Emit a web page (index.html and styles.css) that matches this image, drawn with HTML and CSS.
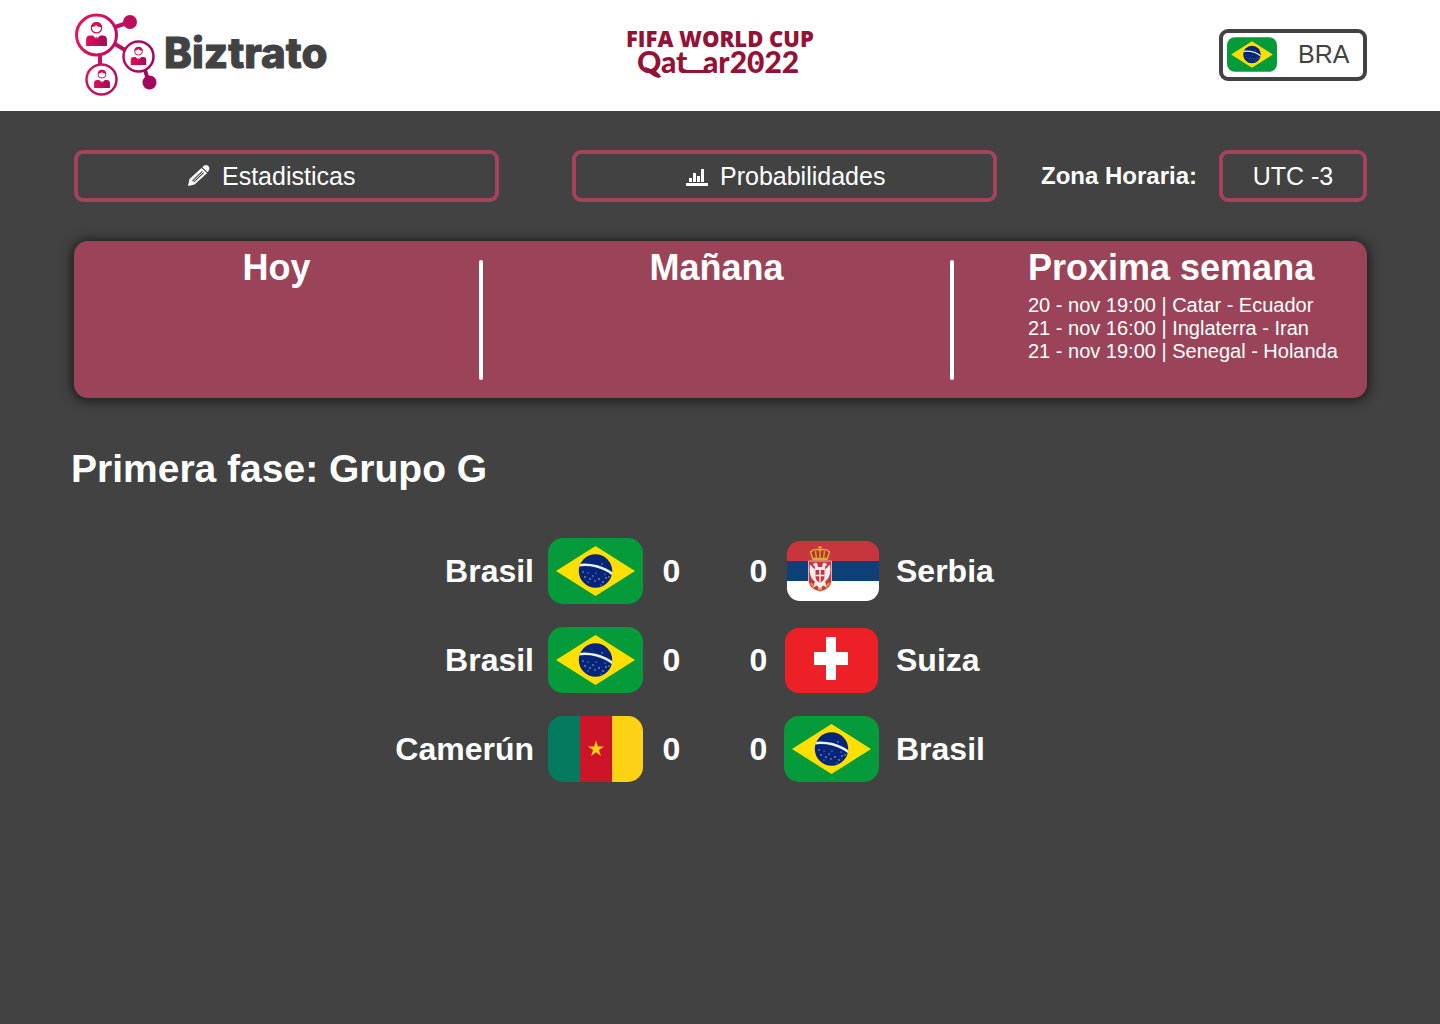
FILE: index.html
```html
<!DOCTYPE html>
<html lang="es">
<head>
<meta charset="utf-8">
<meta name="viewport" content="width=device-width, initial-scale=1">
<title>Biztrato - Qatar 2022</title>
<link rel="stylesheet" href="styles.css">
</head>
<body>
<svg class="sprite" width="0" height="0" aria-hidden="true">
  <defs>
    <linearGradient id="brand" gradientUnits="userSpaceOnUse" x1="0" y1="0" x2="90" y2="20">
      <stop offset="0" stop-color="#ea1560"/>
      <stop offset="1" stop-color="#97065e"/>
    </linearGradient>
    <linearGradient id="suit" x1="0" y1="0" x2="1" y2="0">
      <stop offset="0" stop-color="#e30f55"/>
      <stop offset="1" stop-color="#9d0a5c"/>
    </linearGradient>
    <clipPath id="globe"><circle cx="47.5" cy="33" r="16.7"/></clipPath>
    <clipPath id="serbia-shape"><rect x="3" y="3" width="92" height="60" rx="13"/></clipPath>
    <clipPath id="flag-shape"><rect width="95" height="66" rx="15"/></clipPath>
  </defs>
  <symbol id="person" viewBox="0 0 20 24">
    <circle cx="10" cy="6.5" r="5" fill="none" stroke="#c8105a" stroke-width="1.2"/>
    <path d="M4.8 6C5 2.800 7.500 1 10 1c3 0 5.300 2.200 5.300 5-2.300.3-4.400-.6-5.600-2.100C8.700 5.200 7 6 4.800 6z" fill="#d01058"/>
    <path d="M0 24V17.500C0 15 1.500 13.800 4 13.800h2.500L10 17.500l3.500-3.700H16c2.500 0 4 1.200 4 3.700V24z" fill="url(#suit)"/>
    <path d="M9 15.500h2l-.5 2h-1z" fill="#d01058"/>
  </symbol>
  <symbol id="brazil" viewBox="0 0 95 66">
    <rect width="95" height="66" rx="15" fill="#069b3a"/>
    <path d="M8 33 47.500 8 87 33 47.500 58z" fill="#fedf00"/>
    <circle cx="47.500" cy="33" r="16.700" fill="#05247a"/>
    <g clip-path="url(#globe)">
      <path d="M29 27.500c13-2.300 27 1.500 36 9" fill="none" stroke="#e8f3ee" stroke-width="2.600"/>
      <g fill="#b9c6e2">
        <circle cx="35" cy="34" r=".7"/><circle cx="37" cy="39" r=".8"/><circle cx="40" cy="35" r=".6"/>
        <circle cx="42" cy="41" r=".8"/><circle cx="45" cy="38" r=".7"/><circle cx="48" cy="35" r=".6"/>
        <circle cx="47" cy="43" r=".7"/><circle cx="51" cy="41" r=".8"/><circle cx="55" cy="44" r=".8"/>
        <circle cx="58" cy="40" r=".8"/><circle cx="61" cy="39" r=".7"/><circle cx="53" cy="47" r=".6"/>
        <circle cx="57" cy="36" r=".6"/><circle cx="40" cy="44" r=".6"/><circle cx="54" cy="26" r=".7"/>
      </g>
    </g>
  </symbol>
  <symbol id="serbia" viewBox="0 0 95 66">
    <g clip-path="url(#serbia-shape)">
      <path d="M3 3h92v20H3z" fill="#c7363d"/>
      <path d="M3 23h92v20H3z" fill="#0c4077"/>
      <path d="M3 43h92v20H3z" fill="#fff"/>
    </g>
    <path d="M24.500 23h23v19c0 6-4 10-11.500 11.500C28.500 52 24.500 48 24.500 42z" fill="#c7363d" stroke="#e8d6d8" stroke-width=".8"/>
    <path d="M33 25c-2-1-4 .5-4 2l2 1.500v3l-5-5c-1 7 0 14 5 17l-2 6 4-2 3 4 3-4 4 2-2-6c5-3 6-10 5-17l-5 5v-3l2-1.500c0-1.500-2-3-4-2l-1 4h-4z" fill="#f4eeee"/>
    <path d="M31.500 32h9v7c0 3-2 4.500-4.500 5.500-2.500-1-4.500-2.500-4.500-5.500z" fill="#c7363d"/>
    <path d="M36 32v12M31.500 37.500h9" stroke="#fff" stroke-width="1.300"/>
    <path d="M27 45l3 5M45 45l-3 5M34 51h4" stroke="#dfa02d" stroke-width="1.800"/>
    <path d="M29 21.500 26.500 14c2-2.500 6-3 9.500-2 3.500-1 7.500-.5 9.500 2L43 21.500z" fill="#b2342f" stroke="#dfaa32" stroke-width="1.500"/>
    <path d="M36 8v13M34 9.500h4M31.500 13l1 8M40.500 13l-1 8M29 20.500h14" stroke="#dfaa32" stroke-width="1.400"/>
  </symbol>
  <symbol id="switzerland" viewBox="0 0 95 66">
    <rect x="1" y="1" width="93" height="65" rx="14" fill="#ed1f27"/>
    <path d="M42 10h10v15h12v13H52v15H42V38H30V25h12z" fill="#fff"/>
  </symbol>
  <symbol id="cameroon" viewBox="0 0 95 66">
    <g clip-path="url(#flag-shape)">
      <path d="M0 0h32v66H0z" fill="#047b5f"/>
      <path d="M32 0h32v66H32z" fill="#ce1429"/>
      <path d="M64 0h31v66H64z" fill="#fcd116"/>
    </g>
    <path d="M48 24.500l1.900 5.900H56l-5 3.600 1.900 5.900-4.900-3.600-4.900 3.600L45 34l-5-3.600h6.100z" fill="#fcd116"/>
  </symbol>
</svg>

<header class="topbar">
  <a class="brand" href="#">
    <svg width="262" height="84" viewBox="0 0 262 84" role="img" aria-label="Biztrato">
      <g fill="none" stroke="url(#brand)">
        <path d="M40 14l12-4M40 31l10 6M25 41v11M70 57l3 10" stroke-width="4"/>
        <circle cx="21.500" cy="22" r="20" stroke-width="3"/>
        <circle cx="63.500" cy="43.500" r="15" stroke-width="2.500"/>
        <circle cx="26.500" cy="66.500" r="15" stroke-width="2.500"/>
      </g>
      <circle cx="55" cy="9" r="7" fill="#bd0c5b"/>
      <circle cx="74.500" cy="69.500" r="7" fill="#a2085c"/>
      <use href="#person" x="11" y="8" width="21" height="25"/>
      <use href="#person" x="55.500" y="33" width="16" height="19"/>
      <use href="#person" x="19" y="56" width="16" height="19"/>
      <text class="brand-name" x="89" y="55">Biztrato</text>
    </svg>
  </a>
  <svg class="event" width="190" height="70" viewBox="0 -8 190 70" role="img" aria-label="FIFA World Cup Qatar 2022">
    <text class="event-title" x="0" y="19">FIFA WORLD CUP</text>
    <text class="event-place" x="11" y="45">Qat</text>
    <text class="event-place" x="77" y="45">ar2022</text>
    <path d="M56 40c0 2.500 1.500 3.500 4 3.500h22" fill="none" stroke="#951237" stroke-width="3"/>
    <path d="M19 41c6 1 9 7 14.500 7" fill="none" stroke="#951237" stroke-width="4"/>
    <circle cx="131" cy="35" r="2" fill="#951237"/>
  </svg>
  <button class="country" type="button">
    <svg width="50" height="35" aria-hidden="true"><use href="#brazil"/></svg>
    <span>BRA</span>
  </button>
</header>

<main>
  <nav class="toolbar">
    <button class="action" type="button">
      <svg width="22" height="22" viewBox="0 0 22 22" aria-hidden="true">
        <path d="M0 21l1.500-7L13.500 3 19 8.200 6.500 19.500z" fill="#fff"/>
        <path d="M14.300 2.300C16.500-.3 18.500-.5 20.200 1c1.700 1.500 1.500 3.500-.5 6.200z" fill="#fff"/>
        <path d="M5 16.500 15 7" stroke="#424242" stroke-width="3"/>
        <path d="M5 16.500 15 7" stroke="#fff" stroke-width="1"/>
      </svg>
      <span>Estadisticas</span>
    </button>
    <button class="action" type="button">
      <svg width="22" height="22" viewBox="0 0 22 22" fill="#fff" aria-hidden="true">
        <path d="M0 18h22v3H0zM3 13h3v4H3zM7 8h3v9H7zM11 11h3v6h-3zM15 4h3v13h-3z"/>
      </svg>
      <span>Probabilidades</span>
    </button>
    <label class="zone-label" for="zone">Zona Horaria:</label>
    <select class="zone" id="zone"><option>UTC -3</option></select>
  </nav>

  <section class="schedule">
    <div class="day"><h2>Hoy</h2></div>
    <span class="rule"></span>
    <div class="day"><h2>Mañana</h2></div>
    <span class="rule"></span>
    <div class="day week">
      <h2>Proxima semana</h2>
      <ul>
        <li>20 - nov 19:00 | Catar - Ecuador</li>
        <li>21 - nov 16:00 | Inglaterra - Iran</li>
        <li>21 - nov 19:00 | Senegal - Holanda</li>
      </ul>
    </div>
  </section>

  <section class="stage">
    <h1>Primera fase: Grupo G</h1>
    <ul class="matches">
      <li>
        <span class="home">Brasil</span>
        <svg class="flag" aria-hidden="true"><use href="#brazil"/></svg>
        <span class="score">0</span>
        <span class="score away-score">0</span>
        <svg class="flag" aria-hidden="true"><use href="#serbia"/></svg>
        <span class="away">Serbia</span>
      </li>
      <li>
        <span class="home">Brasil</span>
        <svg class="flag" aria-hidden="true"><use href="#brazil"/></svg>
        <span class="score">0</span>
        <span class="score away-score">0</span>
        <svg class="flag" aria-hidden="true"><use href="#switzerland"/></svg>
        <span class="away">Suiza</span>
      </li>
      <li>
        <span class="home">Camerún</span>
        <svg class="flag" aria-hidden="true"><use href="#cameroon"/></svg>
        <span class="score">0</span>
        <span class="score away-score">0</span>
        <svg class="flag" aria-hidden="true"><use href="#brazil"/></svg>
        <span class="away">Brasil</span>
      </li>
    </ul>
  </section>
</main>
</body>
</html>
```
FILE: styles.css
```css
* {
  box-sizing: border-box;
}

body {
  margin: 0;
  background: #424242;
  color: #fff;
  font-family: "Liberation Sans", Arial, sans-serif;
}

h1,
h2,
ul {
  margin: 0;
  padding: 0;
}

ul {
  list-style: none;
}

svg {
  display: block;
  flex: none;
}

.sprite {
  position: absolute;
}

/* Header */
.topbar {
  display: grid;
  grid-template-columns: 1fr auto 1fr;
  align-items: center;
  min-height: 111px;
  padding: 0 73px 2px 75px;
  background: #fff;
}

.brand {
  justify-self: start;
}

.brand-name {
  fill: #424242;
  stroke: #424242;
  stroke-width: 1px;
  stroke-linejoin: round;
  font: 800 42px Inter, sans-serif;
}

.event-title {
  fill: #951237;
  font: 800 22px "Open Sans", sans-serif;
}

.event-place {
  fill: #951237;
  font: 900 30px Lato, sans-serif;
}

.country {
  justify-self: end;
  display: flex;
  align-items: center;
  gap: 21px;
  width: 148px;
  height: 52px;
  padding: 0 4px;
  border: 4px solid #424242;
  border-radius: 9px;
  background: #fff;
  color: #424242;
  font: 25px "Liberation Sans", Arial, sans-serif;
}

/* Toolbar */
main {
  padding: 39px 73px 40px 74px;
}

.toolbar {
  display: flex;
  align-items: center;
}

.action,
.zone {
  height: 52px;
  border: 4px solid #a5435b;
  border-radius: 9px;
  background: transparent;
  color: #fff;
  font: 25px "Liberation Sans", Arial, sans-serif;
}

.action {
  display: flex;
  flex: 1;
  align-items: center;
  gap: 12px;
  padding: 0 0 0 110px;
}

.action + .action {
  margin-left: 73px;
}

.zone-label {
  margin: 0 22px 0 44px;
  font-size: 24px;
  font-weight: bold;
}

.zone {
  width: 148px;
  padding: 0;
  appearance: none;
  text-align: center;
  text-align-last: center;
}

/* Schedule panel */
.schedule {
  display: grid;
  grid-template-columns: 405fr 4px 467fr 4px 413fr;
  min-height: 157px;
  margin-top: 39px;
  border-radius: 14px;
  background: #9b4459;
  box-shadow: 0 1px 12px 2px rgba(0, 0, 0, 0.6);
}

.day {
  padding-top: 7px;
  text-align: center;
}

.day h2 {
  font-size: 36px;
  line-height: 40px;
}

.week {
  padding-left: 74px;
  text-align: left;
}

.week ul {
  margin-top: 6px;
  font-size: 20px;
  line-height: 23px;
}

.rule {
  margin: 19px 0 18px;
  border-radius: 2px;
  background: #fff;
}

/* Group stage */
.stage {
  margin: 49px -11px 0 -3px;
  padding-right: 22px;
}

.stage h1 {
  font-size: 39px;
  line-height: 44px;
}

.matches {
  display: grid;
  gap: 23px;
  margin-top: 47px;
}

.matches li {
  display: grid;
  grid-template-columns: 1fr 95px 57px 84px 95px 1fr;
  align-items: center;
  font-size: 32px;
  font-weight: bold;
  line-height: 36px;
}

.flag {
  width: 95px;
  height: 66px;
}

.home {
  padding-right: 14px;
  text-align: right;
}

.score {
  text-align: center;
}

.away-score {
  padding-left: 33px;
}

.away {
  padding-left: 17px;
}
```
